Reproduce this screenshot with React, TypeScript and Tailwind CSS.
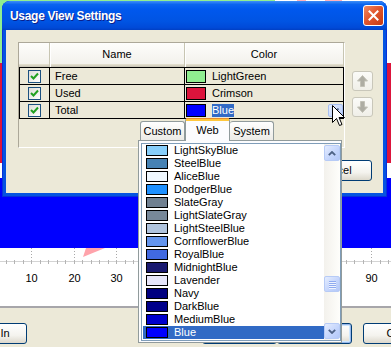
import React from "react";

const rows = [
  { name: "Free", color: "LightGreen", hex: "#90ee90" },
  { name: "Used", color: "Crimson", hex: "#dc143c" },
  { name: "Total", color: "Blue", hex: "#0000ff" },
];

const webColors: [string, string][] = [
  ["LightSkyBlue", "#87cefa"],
  ["SteelBlue", "#4682b4"],
  ["AliceBlue", "#f0f8ff"],
  ["DodgerBlue", "#1e90ff"],
  ["SlateGray", "#708090"],
  ["LightSlateGray", "#778899"],
  ["LightSteelBlue", "#b0c4de"],
  ["CornflowerBlue", "#6495ed"],
  ["RoyalBlue", "#4169e1"],
  ["MidnightBlue", "#191970"],
  ["Lavender", "#e6e6fa"],
  ["Navy", "#000080"],
  ["DarkBlue", "#00008b"],
  ["MediumBlue", "#0000cd"],
  ["Blue", "#0000ff"],
];

// labels 40..80 sit under the color popup, so only the visible ones are drawn
const axisLabels = [1, 2, 3, 9];

function Axis() {
  const ticks = Array.from({ length: 48 }, (_, i) => Math.round(-11.5 + i * 8.5) + 0.5);
  const grid = [1, 2, 3, 4, 5, 6, 7, 8, 9].map((k) => Math.round(-11.5 + 42.5 * k) + 0.5);
  return (
    <svg width="391" height="58" className="block">
      <polygon points="86,0 105,0 83,9" fill="#ffa3ab" />
      {grid.map((x) => (
        <line key={"g" + x} x1={x} x2={x} y1={0} y2={16} stroke="#a8a8a8" strokeDasharray="1 2" />
      ))}
      <line x1="0" x2="391" y1="13.5" y2="13.5" stroke="#d4d4d4" />
      {ticks.map((x) => (
        <line key={"t" + x} x1={x} x2={x} y1={12} y2={16} stroke="#b4b4b4" />
      ))}
      {axisLabels.map((k) => (
        <text
          key={"l" + k}
          x={Math.round(-11.5 + 42.5 * k) + 0.5}
          y={34}
          textAnchor="middle"
          fontSize="11"
          fontFamily="Liberation Sans, Arial, sans-serif"
          fill="#000"
        >
          {k * 10}
        </text>
      ))}
    </svg>
  );
}

function XpButton({ label, className = "", focused = false }: { label?: string; className?: string; focused?: boolean }) {
  return (
    <div
      className={`flex h-[21px] w-[75px] shrink-0 items-center justify-center rounded-[3px] border border-[#003c74] bg-[linear-gradient(#ffffff,#f4f3ee_60%,#dcd8cc)] ${
        focused ? "shadow-[inset_0_0_0_1px_#98b8ea,inset_0_0_0_2px_#cee7ff]" : ""
      } ${className}`}
    >
      {label}
    </div>
  );
}

function Backdrop() {
  return (
    <div className="flex h-full flex-col">
      <div className="flex h-[63px]">
        <div className="w-[275px] bg-[#90ee90]" />
        <div className="flex flex-1 bg-white">
          <div className="ml-[22px] w-[9px] bg-[#ffb0bb]" />
          <div className="ml-[19px] w-[17px] bg-[#ffb0bb]" />
        </div>
      </div>
      <div className="h-[100px] bg-[#dc143c]" />
      <div className="h-[15px] bg-white" />
      <div className="h-[70px] bg-[#0000ff]" />
      <div className="h-[58px] bg-white">
        <Axis />
      </div>
      <div className="flex flex-1 border-t-2 border-[#a7a6aa] bg-[#ece9d8] pt-[15px]">
        <XpButton label="Zoom In" className="ml-[-48px]" />
        <XpButton className="ml-[175px]" />
        <XpButton focused />
        <XpButton label="Close" className="ml-[11px]" />
      </div>
    </div>
  );
}

function CheckBox() {
  return (
    <div className="flex h-[13px] w-[13px] items-center justify-center border border-[#1c5180] bg-[linear-gradient(135deg,#dcdcd7,#ffffff)]">
      <svg width="11" height="11" viewBox="0 0 11 11">
        <polyline points="2,5 4.5,7.5 9,2.5" fill="none" stroke="#21a121" strokeWidth="2" />
      </svg>
    </div>
  );
}

function ArrowButton({ down = false }: { down?: boolean }) {
  return (
    <div className="flex h-[20px] w-[21px] items-center justify-center rounded-[3px] border border-[#c9c7ba] bg-[linear-gradient(#fbfbf8,#f0efe8)]">
      <svg width="11" height="12" viewBox="0 0 11 12" className={down ? "rotate-180" : ""}>
        <polygon points="5.5,0.5 10.5,6 7.5,6 7.5,11.5 3.5,11.5 3.5,6 0.5,6" fill="#aeada3" stroke="#c2c1b6" strokeWidth="1" />
      </svg>
    </div>
  );
}

function Dialog() {
  return (
    <div className="absolute left-[2px] top-[1px] flex h-[196px] w-[385px] flex-col rounded-t-[8px] bg-[#0553e1] shadow-[inset_0_0_0_1px_#0831d9]">
      <div className="flex h-[29px] items-center rounded-t-[8px] bg-[linear-gradient(180deg,#3d8ff7_0%,#0a64f0_12%,#0058ee_28%,#0054e3_70%,#004ad8_92%,#003fc4_100%)] pl-[8px] pr-[3px]">
        <span className="text-[12px] font-bold tracking-[-0.3px] text-white [text-shadow:1px_1px_0_#0a1f8c]">
          Usage View Settings
        </span>
        <div className="ml-auto flex h-[21px] w-[21px] items-center justify-center rounded-[3px] border border-white bg-[linear-gradient(135deg,#f08a64,#e2572f_45%,#c53a12)]">
          <svg width="11" height="11" viewBox="0 0 11 11">
            <path d="M1.5 1.5 L9.5 9.5 M9.5 1.5 L1.5 9.5" stroke="#fff" strokeWidth="2" strokeLinecap="square" />
          </svg>
        </div>
      </div>
      <div className="mx-[4px] mb-[4px] flex-1 bg-[#ece9d8] pt-[12px]">
        <div className="flex items-start">
          <div className="ml-[12px] h-[106px] w-[327px] border border-t-[#aca899] border-l-[#aca899] border-b-white border-r-white">
            <div className="flex h-[24px] bg-[linear-gradient(#fdfdfb,#f1f0ea)] shadow-[inset_0_-1px_0_#cbc7b8,inset_0_-2px_0_#d6d2c2,inset_0_-3px_0_#e2decd]">
              <div className="w-[31px] border-r border-[#c7c5b2]" />
              <div className="flex w-[135px] items-center justify-center border-r border-[#c7c5b2] pb-[1px] shadow-[inset_1px_0_0_#ffffff]">
                Name
              </div>
              <div className="flex w-[159px] items-center justify-center border-r border-[#c7c5b2] pb-[1px] shadow-[inset_1px_0_0_#ffffff]">
                Color
              </div>
            </div>
            <div className="border-t border-black">
              {rows.map((r, i) => (
                <div key={r.name} className="flex h-[17px]">
                  <div className="flex w-[31px] items-center justify-center border-b border-l border-r border-black">
                    <CheckBox />
                  </div>
                  <div className="flex w-[135px] items-center border-b border-r border-black pl-[5px]">{r.name}</div>
                  <div className="flex w-[159px] items-center border-b border-r border-black">
                    <div className="ml-[1px] h-[13px] w-[20px] border border-black" style={{ backgroundColor: r.hex }} />
                    <span className={`ml-[6px] leading-[13px] ${i === 2 ? "bg-[#316ac5] text-white" : ""}`}>
                      {r.color}
                    </span>
                    {i === 2 && (
                      <div className="ml-auto flex h-[13px] w-[15px] items-center justify-center rounded-[2px] border border-[#a7bff0] bg-[linear-gradient(135deg,#e3ecfe,#b9cdfa)]">
                        <svg width="7" height="5" viewBox="0 0 7 5">
                          <polyline points="0.5,0.5 3.5,3.5 6.5,0.5" fill="none" stroke="#4d6185" strokeWidth="1.6" />
                        </svg>
                      </div>
                    )}
                  </div>
                </div>
              ))}
            </div>
          </div>
          <div className="ml-[7px] mt-[29px] flex flex-col gap-[6px]">
            <ArrowButton />
            <ArrowButton down />
          </div>
        </div>
        <div className="mt-[12px] flex justify-end pr-[11px]">
          <XpButton label="Cancel" />
        </div>
      </div>
    </div>
  );
}

function ScrollButton({ down = false }: { down?: boolean }) {
  return (
    <div className="flex h-[16px] w-[16px] items-center justify-center rounded-[2px] border border-[#b7cbf6] bg-[linear-gradient(135deg,#e4ecfe,#c3d4fc_60%,#b4c8f8)]">
      <svg width="8" height="5" viewBox="0 0 8 5" className={down ? "" : "rotate-180"}>
        <polyline points="0.8,0.8 4,4 7.2,0.8" fill="none" stroke="#4d6185" strokeWidth="1.8" />
      </svg>
    </div>
  );
}

function ColorPopup() {
  return (
    <>
      <div className="absolute left-[138px] top-[140px] flex h-[203px] w-[204px] border border-[#919b9c] bg-[#fcfcfe] pl-[2px] pt-[2px]">
        <div className="flex h-[198px] w-[200px] border border-[#7f9db9] bg-white">
          <div className="flex-1">
            {webColors.map(([name, hex], i) => {
              const sel = i === webColors.length - 1;
              return (
                <div
                  key={name}
                  className={`ml-[1px] flex h-[13px] items-center pl-[3px] ${sel ? "bg-[#316ac5] text-white" : ""}`}
                >
                  <div className="h-[11px] w-[22px] border border-black" style={{ backgroundColor: hex }} />
                  <span className="ml-[6px] leading-[13px]">{name}</span>
                </div>
              );
            })}
          </div>
          <div className="flex w-[16px] flex-col bg-[linear-gradient(90deg,#f3f1ec,#fefefb)] py-[1px]">
            <ScrollButton />
            <div className="mt-[115px] flex h-[16px] w-[16px] flex-col items-center justify-center gap-[1px] rounded-[2px] border border-[#b7cbf6] bg-[linear-gradient(135deg,#e4ecfe,#c3d4fc_60%,#b4c8f8)]">
              {[0, 1, 2, 3].map((k) => (
                <div key={k} className="h-[1px] w-[7px] bg-[#8faaf0] shadow-[0_1px_0_#eef3fe]" />
              ))}
            </div>
            <div className="mt-auto">
              <ScrollButton down />
            </div>
          </div>
        </div>
      </div>
      <div className="absolute left-[140px] top-[118px] flex h-[23px] items-start">
        <div className="mt-[3px] flex h-[19px] w-[45px] items-center justify-center rounded-t-[3px] border border-b-0 border-[#919b9c] bg-[linear-gradient(#ffffff,#ecebe6)] pt-[1px]">
          Custom
        </div>
        <div className="flex h-[23px] w-[45px] flex-col rounded-t-[3px] border-x border-[#919b9c] bg-[#fcfcfe]">
          <div className="h-[1px] rounded-t-[3px] bg-[#e68b2c]" />
          <div className="h-[2px] bg-[#ffc73c]" />
          <div className="flex flex-1 items-center justify-center pb-[2px]">Web</div>
        </div>
        <div className="mt-[3px] flex h-[19px] w-[44px] items-center justify-center rounded-t-[3px] border border-b-0 border-l-0 border-[#919b9c] bg-[linear-gradient(#ffffff,#ecebe6)] pt-[1px]">
          System
        </div>
      </div>
    </>
  );
}

function Cursor() {
  return (
    <svg className="absolute left-[332px] top-[105px]" width="14" height="23" viewBox="0 0 14 23">
      <polygon
        points="0.5,0.5 0.5,17.5 4.5,13.5 7.5,20.5 10,19.5 7,12.5 12.5,12.5"
        fill="#fff"
        stroke="#000"
        strokeWidth="1"
        strokeLinejoin="miter"
      />
    </svg>
  );
}

export default function App() {
  return (
    <div className="relative h-[347px] w-[391px] overflow-hidden bg-white font-['Liberation_Sans',Arial,sans-serif] text-[11px] text-black">
      <Backdrop />
      <Dialog />
      <ColorPopup />
      <Cursor />
    </div>
  );
}
